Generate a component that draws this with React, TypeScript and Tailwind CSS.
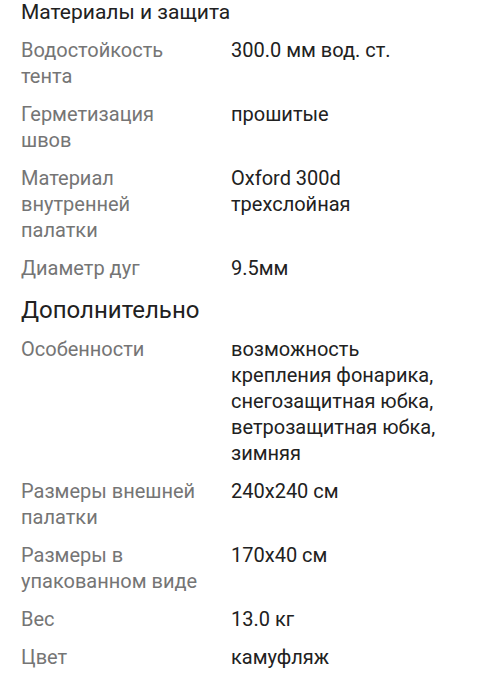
type Row = { label: string; value: string }

const sections: { title: string; size: string; rows: Row[] }[] = [
  {
    title: 'Материалы и защита',
    size: 'text-[21px] leading-[25px]',
    rows: [
      { label: 'Водостойкость тента', value: '300.0 мм вод. ст.' },
      { label: 'Герметизация швов', value: 'прошитые' },
      { label: 'Материал внутренней палатки', value: 'Oxford 300d трехслойная' },
      { label: 'Диаметр дуг', value: '9.5мм' },
    ],
  },
  {
    title: 'Дополнительно',
    size: 'text-[24px] leading-[28px]',
    rows: [
      {
        label: 'Особенности',
        value:
          'возможность крепления фонарика, снегозащитная юбка, ветрозащитная юбка, зимняя',
      },
      { label: 'Размеры внешней палатки', value: '240x240 см' },
      { label: 'Размеры в упакованном виде', value: '170x40 см' },
      { label: 'Вес', value: '13.0 кг' },
      { label: 'Цвет', value: 'камуфляж' },
    ],
  },
]

const SpecRow = ({ label, value }: Row) => {
  return (
    <div className="grid grid-cols-[178px_212px] gap-x-8 text-[20px] leading-[26px]">
      <span className="text-[#757575]">{label}</span>
      <span className="text-[#212121]">{value}</span>
    </div>
  )
}

export default function App() {
  return (
    <div
      className="flex flex-col gap-[15px] bg-white w-[483px] h-[699px] overflow-hidden pl-[21px]"
      style={{ fontFamily: 'Roboto, "Noto Sans", sans-serif' }}
    >
      {sections.map((s) => (
        <div key={s.title} className="flex flex-col gap-3">
          <h2 className={`${s.size} text-[#212121]`}>{s.title}</h2>
          {s.rows.map((r) => (
            <SpecRow key={r.label} label={r.label} value={r.value} />
          ))}
        </div>
      ))}
    </div>
  )
}
